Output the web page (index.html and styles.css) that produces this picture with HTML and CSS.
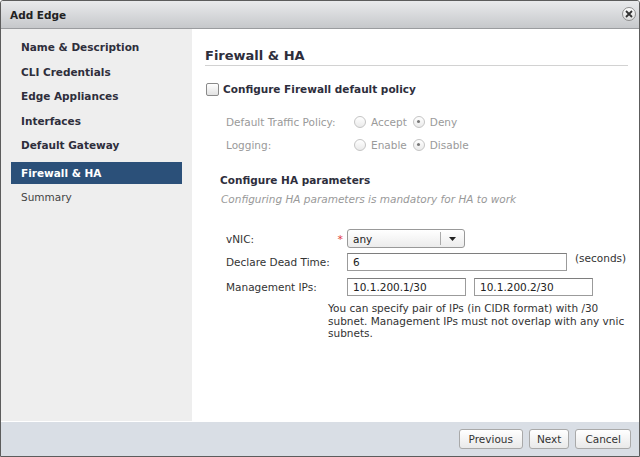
FILE: index.html
```html
<!DOCTYPE html>
<html>
<head>
<meta charset="utf-8">
<link rel="stylesheet" href="styles.css">
</head>
<body>
<div class="dialog">
  <div class="titlebar">
    <span class="title">Add Edge</span>
    <span class="close"><svg width="8" height="8" viewBox="0 0 8 8"><path d="M1 1L7 7M7 1L1 7" stroke="#333" stroke-width="1.8"/></svg></span>
  </div>
  <div class="main">
    <nav class="nav">
      <div class="nav-item">Name &amp; Description</div>
      <div class="nav-item">CLI Credentials</div>
      <div class="nav-item">Edge Appliances</div>
      <div class="nav-item">Interfaces</div>
      <div class="nav-item">Default Gateway</div>
      <div class="nav-item active">Firewall &amp; HA</div>
      <div class="nav-item plain">Summary</div>
    </nav>
    <section class="content">
      <h2 class="heading">Firewall &amp; HA</h2>
      <label class="check-row"><span class="checkbox"></span><span class="check-label">Configure Firewall default policy</span></label>
      <div class="fw-grid">
        <div class="fw-label">Default Traffic Policy:</div>
        <div class="radios"><span class="radio"></span><span class="rlabel">Accept</span><span class="radio on"></span><span class="rlabel">Deny</span></div>
        <div class="fw-label">Logging:</div>
        <div class="radios"><span class="radio"></span><span class="rlabel">Enable</span><span class="radio on"></span><span class="rlabel">Disable</span></div>
      </div>
      <h3 class="subhead">Configure HA parameters</h3>
      <p class="note">Configuring HA parameters is mandatory for HA to work</p>
      <div class="ha-grid">
        <div class="ha-label">vNIC:<span class="req">*</span></div>
        <div class="ha-field"><div class="select"><span class="sel-text">any</span><span class="sel-arrow"><svg width="7" height="4" viewBox="0 0 7 4"><path d="M0 0H7L3.5 4Z" fill="#222"/></svg></span></div></div>
        <div class="ha-label">Declare Dead Time:</div>
        <div class="ha-field"><div class="input wide">6</div><span class="unit">(seconds)</span></div>
        <div class="ha-label">Management IPs:</div>
        <div class="ha-field"><div class="input">10.1.200.1/30</div><div class="input">10.1.200.2/30</div></div>
      </div>
      <p class="help">You can specify pair of IPs (in CIDR format) with /30 subnet. Management IPs must not overlap with any vnic subnets.</p>
    </section>
  </div>
  <div class="footer">
    <button class="btn">Previous</button>
    <button class="btn btn-narrow">Next</button>
    <button class="btn">Cancel</button>
  </div>
</div>
</body>
</html>
```
FILE: styles.css
```css
* { box-sizing: border-box; }
html, body { margin: 0; padding: 0; background: #fff; }
body { font-family: "DejaVu Sans", Verdana, sans-serif; font-size: 10.5px; color: #333; }

.dialog {
  width: 640px; height: 457px;
  border: 1px solid #5c5c5c;
  border-radius: 3px 3px 0 0;
  display: flex; flex-direction: column;
  background: #fff;
  overflow: hidden;
}
.titlebar {
  height: 28px; flex: none;
  background: linear-gradient(#e9eaec, #c6c8cb);
  border-bottom: 1px solid #9a9c9f;
  display: flex; align-items: center; justify-content: space-between;
  padding: 0 3px 0 9px;
}
.title { font-weight: bold; color: #222; font-size: 10.5px; }
.close {
  width: 14px; height: 14px; border-radius: 50%;
  border: 1px solid #8e8e8e;
  background: linear-gradient(#fdfdfd, #dcdcdc);
  display: flex; align-items: center; justify-content: center;
  margin-top: -2px;
}

.main { flex: none; height: 392px; display: flex; }
.nav { width: 191px; background: #eeeeee; padding-top: 6px; flex: none; }
.nav-item {
  height: 24.5px; line-height: 24.5px;
  margin-left: 10px; width: 171px; padding-left: 10px;
  font-weight: bold; color: #2e2e3c; white-space: nowrap;
}
.nav-item.active {
  background: #2b5079; color: #fff;
  height: 22px; line-height: 22px; margin-top: 4.5px;
}
.nav-item.plain { font-weight: normal; color: #444; height: 26px; line-height: 26px; }

.content { flex: 1; padding: 19px 13px 0 13px; }
.heading {
  margin: 0; font-size: 13px; line-height: 16px; font-weight: bold; color: #2e2e3c;
  padding-bottom: 1px; border-bottom: 1px solid #d2d2d2;
}
.check-row { display: flex; align-items: center; height: 16px; margin-top: 15px; padding-left: 1px; }
.checkbox {
  width: 13px; height: 13px; border: 1px solid #8a8a8a; border-radius: 2px;
  background: linear-gradient(#ffffff, #e2e2e2);
  margin-right: 4px;
}
.check-label { font-weight: bold; color: #2e2e3c; }

.fw-grid {
  display: grid; grid-template-columns: 128px auto;
  grid-auto-rows: 23px; align-items: center;
  margin-top: 13px; padding-left: 21px; color: #9a9a9a;
}
.radios { display: flex; align-items: center; }
.radio {
  width: 12px; height: 12px; border-radius: 50%;
  border: 1px solid #c4c4c4; background: linear-gradient(#fff, #eaeaea);
  margin-right: 5px; position: relative;
}
.radio.on::after {
  content: ""; position: absolute; left: 3.5px; top: 3.5px;
  width: 3px; height: 3px; border-radius: 50%; background: #777;
}
.rlabel { margin-right: 6px; }

.subhead { margin: 17px 0 0 15px; font-size: 10.5px; line-height: 14px; font-weight: bold; color: #2e2e3c; }
.note { margin: 5px 0 0 16px; font-style: italic; color: #999; line-height: 14px; }

.ha-grid {
  display: grid; grid-template-columns: 121px auto;
  grid-template-rows: 21px 25px 25px;
  align-items: center;
  margin-top: 22px; padding-left: 21px; color: #333;
}
.ha-label { position: relative; }
.req { position: absolute; right: 4px; top: 0; color: #e23b3b; font-size: 11px; }
.ha-field { display: flex; align-items: flex-start; gap: 8px; }
.select {
  width: 118px; height: 19px; border: 1px solid #999; border-radius: 3px;
  background: linear-gradient(#ffffff, #ececec);
  display: flex; align-items: center;
}
.sel-text { flex: 1; padding-left: 5px; color: #222; }
.sel-arrow {
  width: 24px; height: 13px; border-left: 1px solid #aaa;
  display: flex; align-items: center; justify-content: center;
}
.input {
  width: 119px; height: 18px; border: 1px solid #9b9b9b; border-top-color: #7e7e7e;
  padding-left: 5px; line-height: 16px; color: #222; background: #fff;
}
.input.wide { width: 220px; }
.unit { margin-top: -1px; color: #333; }

.help { margin: 3px 0 0 123px; width: 300px; line-height: 12.7px; color: #333; }

.footer {
  flex: none; margin-top: 1px; height: 34px; background: #d9dee5;
  display: flex; justify-content: flex-end; align-items: center; gap: 6px;
  padding-right: 8px; padding-bottom: 0;
}
.btn {
  height: 20px; padding: 0 9px; border: 1px solid #a9a9a9; border-radius: 3px;
  background: linear-gradient(#ffffff, #e9e9e9);
  font-family: "DejaVu Sans", Verdana, sans-serif; font-size: 10.5px; color: #333;
}
.btn-narrow { padding: 0 7px; }
```
